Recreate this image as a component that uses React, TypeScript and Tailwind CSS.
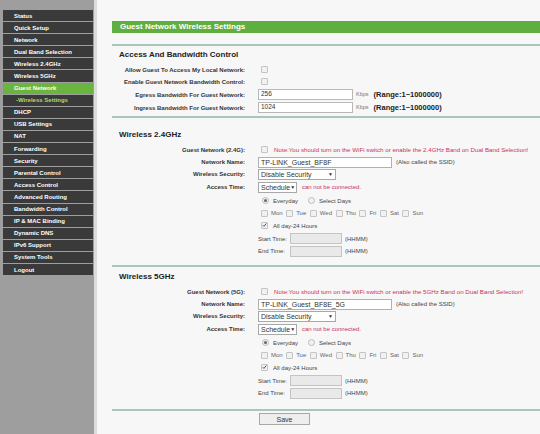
import React from "react";

const NAV = [
  "Status",
  "Quick Setup",
  "Network",
  "Dual Band Selection",
  "Wireless 2.4GHz",
  "Wireless 5GHz",
  "Guest Network",
  "-Wireless Settings",
  "DHCP",
  "USB Settings",
  "NAT",
  "Forwarding",
  "Security",
  "Parental Control",
  "Access Control",
  "Advanced Routing",
  "Bandwidth Control",
  "IP & MAC Binding",
  "Dynamic DNS",
  "IPv6 Support",
  "System Tools",
  "Logout",
];

function Box({ checked }: { checked?: boolean }) {
  return (
    <span className="inline-flex w-[7px] h-[7px] shrink-0 items-center justify-center rounded-[1px] border border-[#c4c4c4] bg-[#f1f1f1]">
      {checked && (
        <svg width="6" height="6" viewBox="0 0 6 6">
          <path d="M0.8 3.2 L2.3 4.7 L5.2 1.2" stroke="#444" strokeWidth="1.1" fill="none" />
        </svg>
      )}
    </span>
  );
}

function Radio({ on }: { on?: boolean }) {
  return (
    <span className="inline-flex w-[7px] h-[7px] shrink-0 items-center justify-center rounded-full border border-[#bcbcbc] bg-[#f1f1f1]">
      {on && <span className="w-[3px] h-[3px] rounded-full bg-[#666]" />}
    </span>
  );
}

function Row({ label, h, children }: { label?: string; h: string; children?: React.ReactNode }) {
  return (
    <div className={`flex items-center ${h}`}>
      <div className="w-[133px] shrink-0 text-right text-[6px] font-bold text-[#333] leading-none">{label}</div>
      <div className="ml-[13px] flex items-center text-[6px] text-[#444] leading-none">{children}</div>
    </div>
  );
}

function Select({ w, text }: { w: string; text: string }) {
  return (
    <div className={`${w} h-[11px] flex items-center justify-between border border-[#a8a8a8] bg-white px-[2px] text-[7px] text-[#333] leading-none`}>
      <span>{text}</span>
      <span className="text-[5px]">▼</span>
    </div>
  );
}

function Sep({ mt }: { mt: string }) {
  return <div className={`h-[2px] bg-[#a9c6ba] ${mt}`} />;
}

function WirelessSection({
  title,
  guestLabel,
  band,
  ssid,
  titleMt,
}: {
  title: string;
  guestLabel: string;
  band: string;
  ssid: string;
  titleMt: string;
}) {
  const days = ["Mon", "Tue", "Wed", "Thu", "Fri", "Sat", "Sun"];
  return (
    <div>
      <div className={`h-[10px] ${titleMt} pl-[7px] text-[8px] font-bold leading-[10px] text-[#222]`}>{title}</div>
      <div className="mt-[4px]">
        <Row label={guestLabel} h="h-[12px]">
          <span className="ml-[3px]"><Box /></span>
          <span className="ml-[6px] text-[6.2px] text-[#c8325a]">
            Note:You should turn on the WiFi switch or enable the {band} Band on Dual Band Selection!
          </span>
        </Row>
        <Row label="Network Name:" h="h-[12px]">
          <div className="w-[134px] h-[11px] flex items-center border border-[#b0b0b0] bg-white px-[2px] text-[7px] text-[#333]">
            {ssid}
          </div>
          <span className="ml-[4px]">(Also called the SSID)</span>
        </Row>
        <Row label="Wireless Security:" h="h-[12px]">
          <Select w="w-[78px]" text="Disable Security" />
        </Row>
        <Row label="Access Time:" h="h-[14px]">
          <Select w="w-[39px]" text="Schedule" />
          <span className="ml-[5px] text-[#c8325a]">can not be connected.</span>
        </Row>
        <Row h="h-[13px]">
          <span className="ml-[4px]"><Radio on /></span>
          <span className="ml-[4px]">Everyday</span>
          <span className="ml-[10px]"><Radio /></span>
          <span className="ml-[4px]">Select Days</span>
        </Row>
        <Row h="h-[12px]">
          <div className="ml-[3px] flex items-center gap-[3.5px]">
            {days.map((d) => (
              <span key={d} className="flex items-center gap-[3px]">
                <Box />
                <span className="text-[#666]">{d}</span>
              </span>
            ))}
          </div>
        </Row>
        <Row h="h-[13px]">
          <span className="ml-[3px]"><Box checked /></span>
          <span className="ml-[5px]">All day-24 Hours</span>
        </Row>
        <Row h="h-[13px]">
          <span className="w-[32px]">Start Time:</span>
          <div className="w-[52px] h-[11px] border border-[#c4c4c4] bg-[#e9e9e9]" />
          <span className="ml-[3px]">(HHMM)</span>
        </Row>
        <Row h="h-[12px]">
          <span className="w-[32px]">End Time:</span>
          <div className="w-[52px] h-[11px] border border-[#c4c4c4] bg-[#e9e9e9]" />
          <span className="ml-[3px]">(HHMM)</span>
        </Row>
      </div>
    </div>
  );
}

export default function App() {
  return (
    <div className="flex w-[540px] h-[434px] overflow-hidden bg-[#f7f7f7] font-['Liberation_Sans',Arial,sans-serif]">
      <div className="w-[97px] h-full shrink-0 bg-[#9e9e9e] border-r-[3px] border-[#dcdcdc] pt-[10px] pl-[3px]">
        <div className="flex flex-col gap-[1px] w-[90px]">
          {NAV.map((n) => {
            const active = n === "Guest Network";
            const sub = n.startsWith("-");
            return (
              <div
                key={n}
                className={`h-[11.1px] flex items-center text-[6px] font-bold leading-none ${
                  active ? "bg-[#69b53f] text-white" : "bg-[#3a3a3a]"
                } ${sub ? "pl-[13px] text-[#b7d86a]" : "pl-[11px]"} ${!active && !sub ? "text-white" : ""}`}
              >
                {n}
              </div>
            );
          })}
        </div>
      </div>

      <div className="flex-1 pl-[15px] pt-[21px]">
        <div className="h-[12px] bg-[#5fae40] pl-[8px] flex items-center text-[8px] font-bold text-white leading-none">
          Guest Network Wireless Settings
        </div>
        <Sep mt="mt-[11px]" />
        <div className="h-[10px] mt-[4px] pl-[7px] text-[8px] font-bold leading-[10px] text-[#222]">
          Access And Bandwidth Control
        </div>
        <div className="mt-[4px]">
          <Row label="Allow Guest To Access My Local Network:" h="h-[12px]">
            <span className="ml-[3px]"><Box /></span>
          </Row>
          <Row label="Enable Guest Network Bandwidth Control:" h="h-[12px]">
            <span className="ml-[3px]"><Box /></span>
          </Row>
          <Row label="Egress Bandwidth For Guest Network:" h="h-[13px]">
            <div className="w-[95px] h-[11px] flex items-center border border-[#b8b8b8] bg-white px-[2px] text-[6.5px] text-[#333]">256</div>
            <span className="ml-[3px] text-[5.5px] text-[#777]">Kbps</span>
            <span className="ml-[5px] text-[7.5px] font-bold text-[#222]">(Range:1~1000000)</span>
          </Row>
          <Row label="Ingress Bandwidth For Guest Network:" h="h-[13px]">
            <div className="w-[95px] h-[11px] flex items-center border border-[#b8b8b8] bg-white px-[2px] text-[6.5px] text-[#333]">1024</div>
            <span className="ml-[3px] text-[5.5px] text-[#777]">Kbps</span>
            <span className="ml-[5px] text-[7.5px] font-bold text-[#222]">(Range:1~1000000)</span>
          </Row>
        </div>
        <Sep mt="mt-[2px]" />
        <WirelessSection
          title="Wireless 2.4GHz"
          guestLabel="Guest Network (2.4G):"
          band="2.4GHz"
          ssid="TP-LINK_Guest_BF8F"
          titleMt="mt-[12px]"
        />
        <Sep mt="mt-[8px]" />
        <WirelessSection
          title="Wireless 5GHz"
          guestLabel="Guest Network (5G):"
          band="5GHz"
          ssid="TP-LINK_Guest_BF8E_5G"
          titleMt="mt-[5px]"
        />
        <Sep mt="mt-[10px]" />
        <div className="mt-[2px] pl-[147px] flex">
          <button className="w-[51px] h-[12px] border border-[#a8a8a8] bg-[#eeeeee] text-[7px] text-[#333] leading-none">
            Save
          </button>
        </div>
      </div>
    </div>
  );
}
